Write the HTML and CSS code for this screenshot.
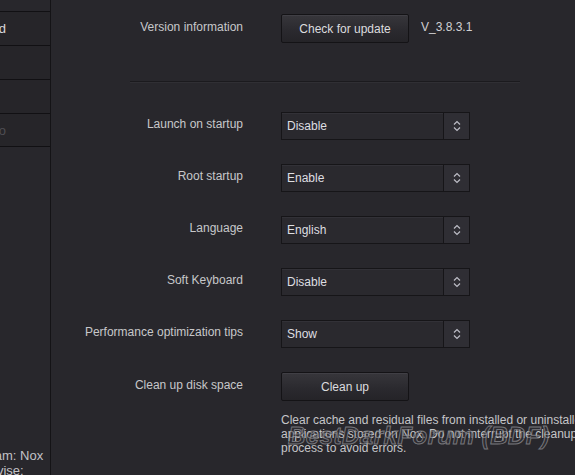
FILE: index.html
```html
<!DOCTYPE html>
<html lang="en">
<head>
<meta charset="utf-8">
<title>Settings</title>
<link rel="stylesheet" href="styles.css">
</head>
<body>
<div class="app">
  <aside class="sidebar">
    <ul class="nav">
      <li class="nav-item active">Advanced</li>
      <li class="nav-item">Properties</li>
      <li class="nav-item">Interface</li>
      <li class="nav-item dim">Shortcut keys go</li>
    </ul>
    <div class="about">
      <div>Team: Nox</div>
      <div>Advise:</div>
    </div>
  </aside>

  <main class="panel">
    <div class="row version-row">
      <div class="label">Version information</div>
      <div class="control">
        <button class="btn">Check for update</button>
        <span class="version">V_3.8.3.1</span>
      </div>
    </div>

    <hr class="divider">

    <div class="settings">
      <div class="row">
        <div class="label">Launch on startup</div>
        <div class="select"><span class="value">Disable</span><span class="spin"><svg viewBox="0 0 10 14" width="10" height="14"><path d="M2 5.5 L5 2.5 L8 5.5 M2 8.5 L5 11.5 L8 8.5" fill="none" stroke="#bdbdc6" stroke-width="1.2"/></svg></span></div>
      </div>
      <div class="row">
        <div class="label">Root startup</div>
        <div class="select"><span class="value">Enable</span><span class="spin"><svg viewBox="0 0 10 14" width="10" height="14"><path d="M2 5.5 L5 2.5 L8 5.5 M2 8.5 L5 11.5 L8 8.5" fill="none" stroke="#bdbdc6" stroke-width="1.2"/></svg></span></div>
      </div>
      <div class="row">
        <div class="label">Language</div>
        <div class="select"><span class="value">English</span><span class="spin"><svg viewBox="0 0 10 14" width="10" height="14"><path d="M2 5.5 L5 2.5 L8 5.5 M2 8.5 L5 11.5 L8 8.5" fill="none" stroke="#bdbdc6" stroke-width="1.2"/></svg></span></div>
      </div>
      <div class="row">
        <div class="label">Soft Keyboard</div>
        <div class="select"><span class="value">Disable</span><span class="spin"><svg viewBox="0 0 10 14" width="10" height="14"><path d="M2 5.5 L5 2.5 L8 5.5 M2 8.5 L5 11.5 L8 8.5" fill="none" stroke="#bdbdc6" stroke-width="1.2"/></svg></span></div>
      </div>
      <div class="row">
        <div class="label">Performance optimization tips</div>
        <div class="select"><span class="value">Show</span><span class="spin"><svg viewBox="0 0 10 14" width="10" height="14"><path d="M2 5.5 L5 2.5 L8 5.5 M2 8.5 L5 11.5 L8 8.5" fill="none" stroke="#bdbdc6" stroke-width="1.2"/></svg></span></div>
      </div>
      <div class="row">
        <div class="label">Clean up disk space</div>
        <div class="control"><button class="btn btn-clean">Clean up</button></div>
      </div>
    </div>

    <div class="row desc-row">
      <div class="label"></div>
      <p class="desc">Clear cache and residual files from installed or uninstalled<br>applications stored on Nox. Do not interrupt the cleanup<br>process to avoid errors.</p>
    </div>

    <div class="watermark">BestDarkForum (BDF)</div>
  </main>
</div>
</body>
</html>
```

FILE: styles.css
```css
* { box-sizing: border-box; }

html, body {
  margin: 0;
  padding: 0;
  width: 575px;
  height: 475px;
  overflow: hidden;
  background: #28272c;
  font-family: "Liberation Sans", Arial, sans-serif;
  font-size: 12px;
  color: #c9c9cc;
}

.app {
  display: flex;
  height: 475px;
}

/* left navigation, scrolled so only its right edge shows */
.sidebar {
  width: 51px;
  flex: none;
  border-right: 1px solid #141316;
  display: flex;
  flex-direction: column;
  justify-content: space-between;
  overflow: hidden;
}

.nav {
  list-style: none;
  margin: 11px 0 0 -110px;
  padding: 0;
  width: 160px;
}

.nav-item {
  height: 34px;
  line-height: 34px;
  border-top: 1px solid #111013;
  background: #262529;
  text-align: right;
  padding-right: 60px;
  color: #7d7d82;
  font-size: 13px;
  white-space: nowrap;
}
.nav-item:last-child { border-bottom: 1px solid #111013; }
.nav-item.active { color: #d8d8dc; padding-right: 44px; }
.nav-item.dim { color: #4e4e53; padding-right: 44px; }

.about {
  margin: 0 0 -3px -19px;
  font-size: 13px;
  line-height: 15px;
  color: #c2c2c6;
  white-space: nowrap;
}

.panel {
  position: relative;
  flex: 1;
  padding-top: 14px;
}

.row {
  display: grid;
  grid-template-columns: 192px auto;
  column-gap: 38px;
  align-items: center;
}

.label {
  text-align: right;
  margin-bottom: 4px;
  white-space: nowrap;
  color: #c7c7ca;
}

.control {
  display: flex;
  align-items: center;
  gap: 12px;
}

.btn {
  width: 128px;
  height: 29px;
  padding: 0;
  border: 1px solid #141316;
  border-radius: 2px;
  background: linear-gradient(#37363b, #2a292e 60%, #252428);
  box-shadow: inset 0 1px 0 #403f45;
  color: #dcdcdf;
  font: inherit;
}

.version {
  margin-bottom: 4px;
  color: #d0d0d3;
}

.divider {
  margin: 38px 0 0 79px;
  width: 390px;
  height: 0;
  border: 0;
  border-top: 1px solid #1b1a1e;
  border-bottom: 1px solid #302f34;
}

.settings {
  margin-top: 29px;
  display: flex;
  flex-direction: column;
  gap: 24px;
}

.select {
  width: 189px;
  height: 28px;
  display: flex;
  border: 1px solid #161518;
  background: #2a292e;
  box-shadow: inset 0 1px 0 #323137;
}

.value {
  flex: 1;
  padding-left: 5px;
  line-height: 26px;
  color: #dedee1;
}

.spin {
  width: 26px;
  border-left: 1px solid #161518;
  background: #2f2e34;
  display: flex;
  align-items: center;
  justify-content: center;
}

.btn-clean { height: 29px; }

.desc-row { margin-top: 12px; align-items: start; }

.desc {
  margin: 0;
  line-height: 14px;
  white-space: nowrap;
  color: #c5c5c8;
}

/* forum watermark stamped over the description */
.watermark {
  position: absolute;
  left: 237px;
  top: 422px;
  font-size: 24px;
  font-weight: bold;
  font-style: italic;
  letter-spacing: 0.5px;
  white-space: nowrap;
  color: rgba(50, 49, 54, 0.5);
  -webkit-text-stroke: 1px rgba(170, 170, 175, 0.6);
  pointer-events: none;
}
```
